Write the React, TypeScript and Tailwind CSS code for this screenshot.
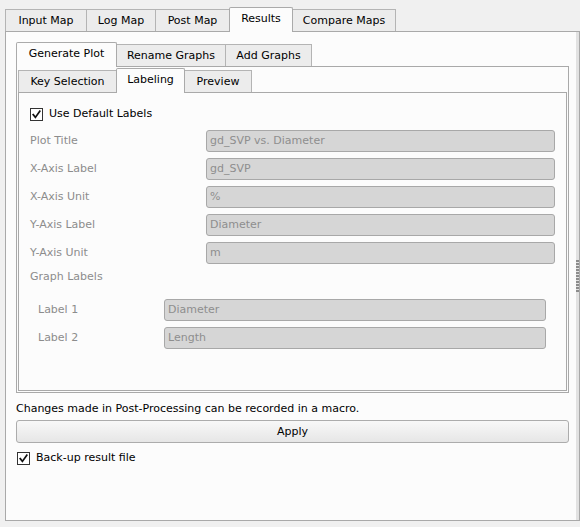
import React from "react";

const font = { fontFamily: '"DejaVu Sans", Verdana, sans-serif' };

function Check() {
  return (
    <div className="w-[13px] h-[13px] border border-[#333333] bg-white flex items-center justify-center shrink-0">
      <svg width="11" height="11" viewBox="0 0 11 11">
        <path d="M2.2 5.6 L4.4 8.4 L8.8 2.2" fill="none" stroke="#111" strokeWidth="1.7" strokeLinecap="square" />
      </svg>
    </div>
  );
}

type TabDef = { label: string; w: string; selected?: boolean };

function TabBar({ tabs }: { tabs: TabDef[] }) {
  return (
    <div className="flex items-end h-[24px] shrink-0">
      {tabs.map((t, i) => (
        <div
          key={t.label}
          className={
            (i > 0 ? "-ml-px " : "") +
            t.w +
            (t.selected
              ? " relative z-10 h-[25px] -mb-px bg-[#fcfcfc] border-l border-t border-r border-[#aaaaaa] rounded-t-[2px] flex items-center justify-center pb-[2px] text-black"
              : " h-[22px] bg-[#ececec] border-l border-t border-r border-[#b4b4b4] flex items-center justify-center pt-px text-black")
          }
        >
          {t.label}
        </div>
      ))}
    </div>
  );
}

function Field({ value }: { value: string }) {
  return (
    <div className="flex-1 h-[22px] bg-[#d6d6d6] border border-[#a8a8a8] rounded-[3px] flex items-center px-[3px] text-[#8e8e8e]">
      {value}
    </div>
  );
}

function Row({ label, value, labelW }: { label: string; value: string; labelW: string }) {
  return (
    <div className="flex items-center h-[28px]">
      <div className={labelW + " shrink-0 text-[#8c8c8c]"}>{label}</div>
      <Field value={value} />
    </div>
  );
}

export default function App() {
  return (
    <div className="w-[580px] h-[527px] bg-[#f0f0f0] pt-[7px] pl-[5px] text-[11px] leading-[16px] overflow-hidden" style={font}>
      <TabBar
        tabs={[
          { label: "Input Map", w: "w-[82px]" },
          { label: "Log Map", w: "w-[70px]" },
          { label: "Post Map", w: "w-[75px]" },
          { label: "Results", w: "w-[64px]", selected: true },
          { label: "Compare Maps", w: "w-[104px]" },
        ]}
      />
      <div className="w-[575px] h-[490px] bg-[#fcfcfc] border border-[#a9a9a9] flex">
        <div className="w-[570px] pl-[10px] pr-[7px] pt-[10px] flex flex-col">
          <TabBar
            tabs={[
              { label: "Generate Plot", w: "w-[101px]", selected: true },
              { label: "Rename Graphs", w: "w-[110px]" },
              { label: "Add Graphs", w: "w-[87px]" },
            ]}
          />
          <div className="h-[327px] border border-[#a9a9a9] p-px flex flex-col">
            <TabBar
              tabs={[
                { label: "Key Selection", w: "w-[99px]" },
                { label: "Labeling", w: "w-[69px]", selected: true },
                { label: "Preview", w: "w-[68px]" },
              ]}
            />
            <div className="flex-1 border border-[#a9a9a9] px-[11px] pt-[8px] flex flex-col">
              <div className="flex items-center h-[26px]">
                <Check />
                <span className="ml-[6px] text-black">Use Default Labels</span>
              </div>
              <Row label="Plot Title" value="gd_SVP vs. Diameter" labelW="w-[176px]" />
              <Row label="X-Axis Label" value="gd_SVP" labelW="w-[176px]" />
              <Row label="X-Axis Unit" value="%" labelW="w-[176px]" />
              <Row label="Y-Axis Label" value="Diameter" labelW="w-[176px]" />
              <Row label="Y-Axis Unit" value="m" labelW="w-[176px]" />
              <div className="h-[20px] flex items-center text-[#8c8c8c]">Graph Labels</div>
              <div className="mt-[9px] pl-[8px] pr-[9px] flex flex-col">
                <Row label="Label 1" value="Diameter" labelW="w-[126px]" />
                <Row label="Label 2" value="Length" labelW="w-[126px]" />
              </div>
            </div>
          </div>
          <div className="mt-[8px] h-[16px] flex items-center text-black">
            Changes made in Post-Processing can be recorded in a macro.
          </div>
          <div className="mt-[3px] h-[23px] border border-[#acacac] rounded-[3px] bg-gradient-to-b from-[#f8f8f8] to-[#e6e6e6] flex items-center justify-center text-black">
            Apply
          </div>
          <div className="mt-[7px] h-[16px] flex items-center pl-[1px]">
            <Check />
            <span className="ml-[6px] text-black">Back-up result file</span>
          </div>
        </div>
        <div className="w-[3px] bg-[#e2e2e2] flex flex-col justify-center gap-px">
          {Array.from({ length: 11 }).map((_, i) => (
            <div key={i} className="h-[2px] bg-[#8c8c8c]" />
          ))}
        </div>
      </div>
    </div>
  );
}
